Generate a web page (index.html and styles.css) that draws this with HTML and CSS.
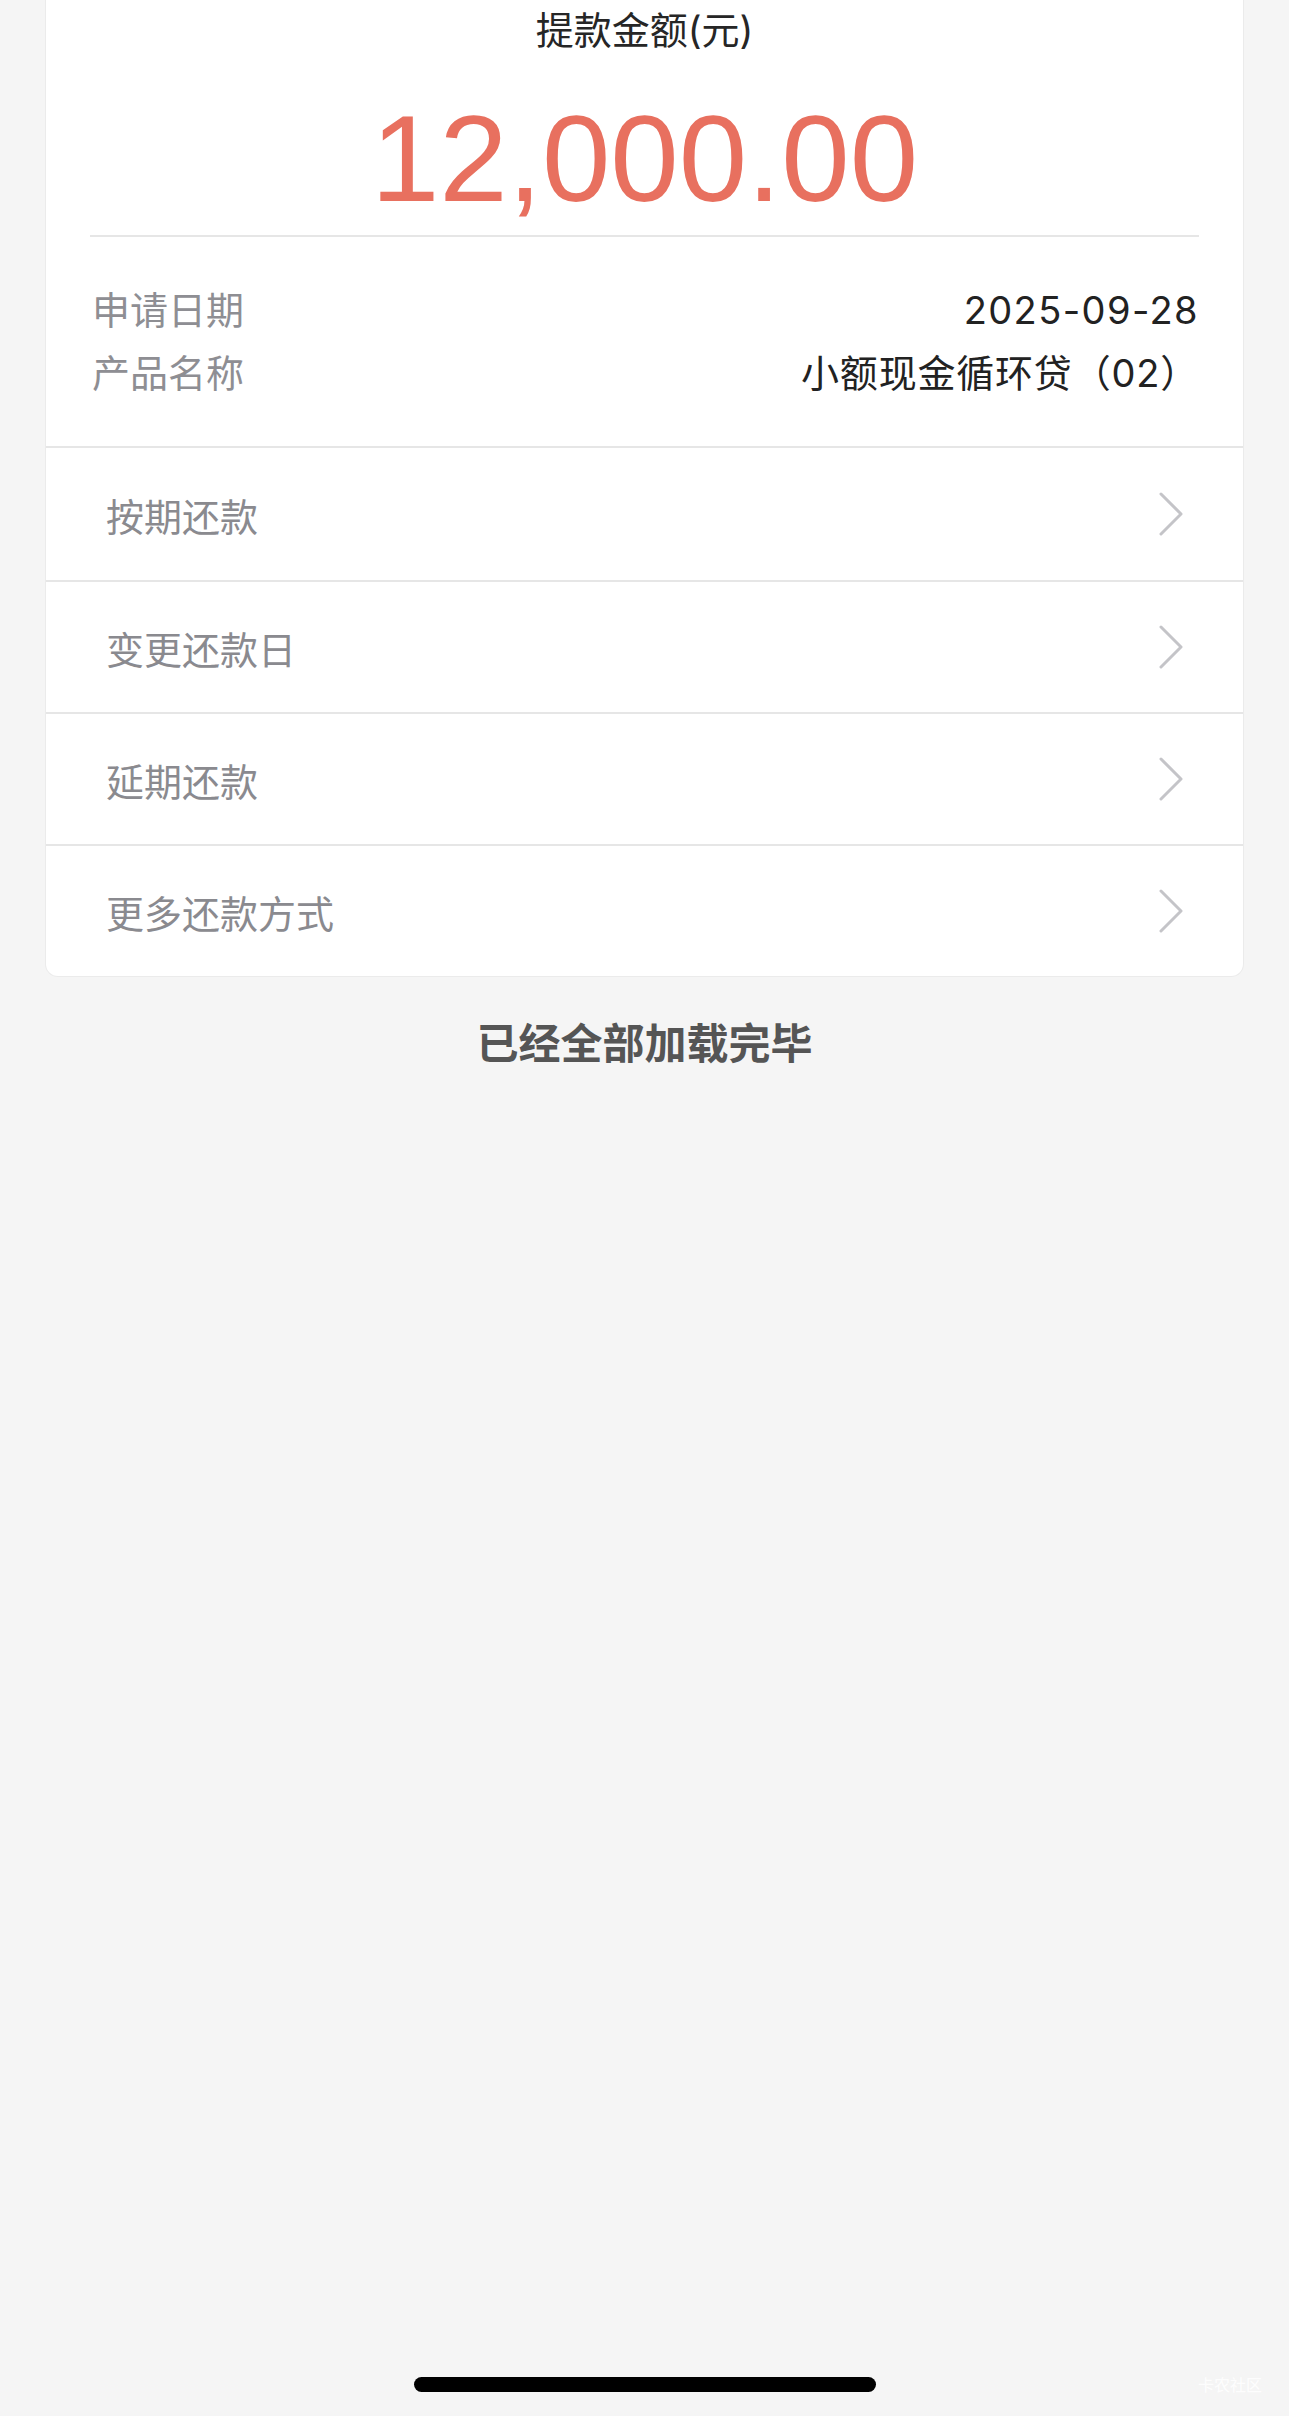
FILE: index.html
```html
<!DOCTYPE html>
<html lang="zh-CN">
<head>
  <meta charset="UTF-8" />
  <title>提款详情</title>
  <meta name="viewport" content="width=device-width, initial-scale=1.0" />
  <link rel="stylesheet" href="styles.css">
</head>
<body>
  <div class="card">
    <div class="summary">
      <div class="title">提款金额(元)</div>
      <div class="amount">12,000.00</div>
      <div class="info">
        <div class="info-row"><span class="label">申请日期</span><span class="value date">2025-09-28</span></div>
        <div class="info-row"><span class="label">产品名称</span><span class="value product">小额现金循环贷（02）</span></div>
      </div>
    </div>

    <div class="menu-item">
      <span>按期还款</span>
      <svg class="chevron" viewBox="0 0 24 44"><polyline points="2,2 22,22 2,42" /></svg>
    </div>
    <div class="menu-item">
      <span>变更还款日</span>
      <svg class="chevron" viewBox="0 0 24 44"><polyline points="2,2 22,22 2,42" /></svg>
    </div>
    <div class="menu-item">
      <span>延期还款</span>
      <svg class="chevron" viewBox="0 0 24 44"><polyline points="2,2 22,22 2,42" /></svg>
    </div>
    <div class="menu-item">
      <span>更多还款方式</span>
      <svg class="chevron" viewBox="0 0 24 44"><polyline points="2,2 22,22 2,42" /></svg>
    </div>
  </div>

  <div class="loaded">已经全部加载完毕</div>

  <div class="footer">
    <div class="home-bar"></div>
    <span class="watermark">卡农社区</span>
  </div>
</body>
</html>
```

FILE: styles.css
```css
* {
  box-sizing: border-box;
}
body {
  margin: 0;
  min-height: 100vh;
  background-color: #f5f5f5;
  font-family: Inter, "Noto Sans CJK SC", sans-serif;
  display: flex;
  flex-direction: column;
}
.card {
  margin: 0 46px;
  background: #fff;
  border-radius: 0 0 12px 12px;
  box-shadow: 0 0 0 1px #ebebeb;
}
.summary {
  padding: 0 44px;
  border-bottom: 2px solid #e6e6e6;
}
.title {
  text-align: center;
  font-size: 38px;
  line-height: 60px;
  color: #262626;
}
.amount {
  margin-top: 38px;
  text-align: center;
  font-family: "Liberation Sans", Arial, sans-serif;
  font-size: 123px;
  line-height: 122px;
  color: #e8705f;
}
.info {
  margin-top: 15px;
  border-top: 2px solid #e6e6e6;
  padding: 42px 0 41px 2px;
}
.info-row {
  display: flex;
  justify-content: space-between;
  font-size: 38px;
  line-height: 63px;
}
.label {
  color: #8e8e93;
}
.value {
  color: #222;
}
.date {
  letter-spacing: 1.4px;
}
.product {
  letter-spacing: 0.8px;
}
.menu-item {
  display: flex;
  align-items: center;
  justify-content: space-between;
  height: 132px;
  padding: 0 60px;
  font-size: 38px;
  color: #8a8a8f;
  border-top: 2px solid #e6e6e6;
}
.summary + .menu-item {
  border-top: none;
}
.chevron {
  width: 24px;
  height: 44px;
}
.chevron polyline {
  fill: none;
  stroke: #c4c4c8;
  stroke-width: 3;
  stroke-linecap: round;
  stroke-linejoin: round;
}
.loaded {
  margin-top: 38px;
  text-align: center;
  font-size: 42px;
  line-height: 60px;
  font-weight: bold;
  color: #555;
}
.footer {
  margin-top: auto;
  padding-bottom: 24px;
  display: flex;
  justify-content: center;
  position: relative;
}
.home-bar {
  width: 462px;
  height: 15px;
  border-radius: 8px;
  background: #000;
}
.watermark {
  position: absolute;
  right: 27px;
  bottom: 20px;
  font-size: 16px;
  color: rgba(255, 255, 255, 0.9);
}
```
